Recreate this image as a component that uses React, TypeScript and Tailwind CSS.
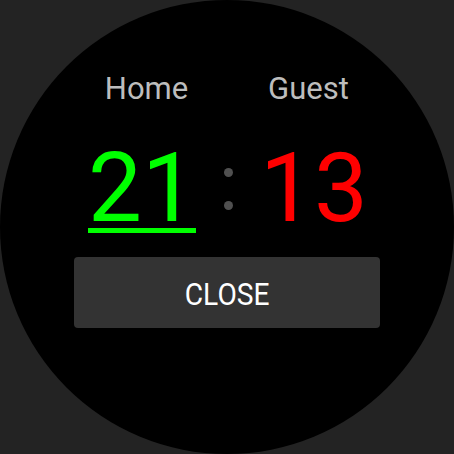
import * as React from 'react';

const Scoreboard = () => {
  return (
    <div className="w-[454px] h-[454px] bg-[#232323] font-['Roboto',sans-serif]">
      <div className="w-[454px] h-[454px] rounded-full bg-black flex flex-col pt-[70px]">
        <div className="flex h-[37px] text-[31px] leading-[37px] text-[#bdbdbd]">
          <div className="w-[147px] ml-[73px] text-center">Home</div>
          <div className="w-[147px] ml-[15px] text-center">Guest</div>
        </div>

        <div className="flex mt-[40px] ml-[88px]">
          <div className="w-[108px] h-[86px] leading-[82px] text-[96px] text-[#00ff00] text-center border-b-[5px] border-[#00ff00]">
            21
          </div>
          <div className="w-[64px] flex flex-col items-center pt-[21px] gap-[24px]">
            <div className="w-[9px] h-[9px] rounded-full bg-[#505050]" />
            <div className="w-[9px] h-[9px] rounded-full bg-[#505050]" />
          </div>
          <div className="w-[104px] h-[82px] leading-[82px] text-[96px] text-[#ff0000] text-center">
            13
          </div>
        </div>

        <button className="mt-[24px] ml-[74px] w-[306px] h-[71px] rounded-[4px] bg-[#333333] flex items-center justify-center">
          <span className="text-[32px] text-white scale-x-[0.88] inline-block translate-y-[1px]">CLOSE</span>
        </button>
      </div>
    </div>
  );
};

export default function App() {
  return <Scoreboard />;
}
